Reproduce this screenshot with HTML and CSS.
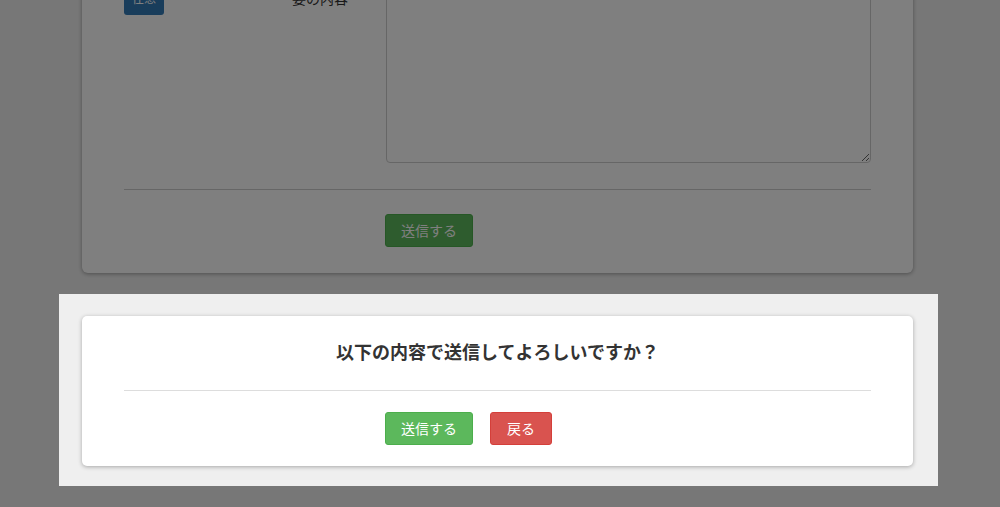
FILE: index.html
```html
<!DOCTYPE html>
<html lang="ja">
<head>
<meta charset="utf-8">
<title>送信確認</title>
<link rel="stylesheet" href="styles.css">
</head>
<body>
<div class="page">
  <form class="form-card">
    <div class="form-row">
      <div class="label-col">
        <span class="badge">任意</span>
        <span class="label-text">ご依頼の概<br>要の内容</span>
      </div>
      <div class="field-col">
        <textarea class="textarea"></textarea>
      </div>
    </div>
    <hr class="divider">
    <div class="btn-row">
      <div></div>
      <div class="btn-group">
        <button type="button" class="btn btn-success">送信する</button>
      </div>
    </div>
  </form>
</div>

<div class="overlay">
  <div class="modal">
    <div class="modal-card">
      <h3 class="modal-title">以下の内容で送信してよろしいですか？</h3>
      <hr class="divider modal-divider">
      <div class="btn-row">
        <div></div>
        <div class="btn-group">
          <button type="button" class="btn btn-success">送信する</button>
          <button type="button" class="btn btn-danger">戻る</button>
        </div>
      </div>
    </div>
  </div>
</div>
</body>
</html>
```

FILE: styles.css
```css
* { box-sizing: border-box; }

html, body {
  margin: 0;
  padding: 0;
  height: 100%;
  overflow: hidden;
}

body {
  background: #efefef;
  font-family: "Noto Sans CJK JP", "Noto Sans", "Liberation Sans", sans-serif;
  font-size: 14px;
  color: #333;
}

.page {
  padding-left: 82px;
}

.form-card {
  width: 831px;
  margin-top: -14px;
  background: #fff;
  border-radius: 6px;
  box-shadow: 0 1px 4px rgba(0, 0, 0, 0.35);
  padding: 0 42px 26px;
}

.form-row {
  display: grid;
  grid-template-columns: 262px 1fr;
}

.label-col {
  display: flex;
  justify-content: space-between;
  align-items: flex-start;
  padding-right: 38px;
}

.badge {
  display: inline-block;
  height: 29px;
  width: 40px;
  padding-top: 2px;
  background: #337ab7;
  color: #fff;
  border-radius: 3px;
  font-size: 12px;
  line-height: 20px;
  text-align: center;
}

.label-text {
  margin-top: -18px;
  text-align: right;
  line-height: 20px;
  font-size: 14px;
  color: #333;
}

.field-col {
  display: flex;
}

.textarea {
  display: block;
  width: 485px;
  height: 177px;
  border: 1px solid #ccc;
  border-radius: 4px;
  background: #fff;
  resize: vertical;
  box-shadow: inset 0 1px 1px rgba(0, 0, 0, 0.075);
  font-family: inherit;
}

.divider {
  border: 0;
  border-top: 1px solid #ccc;
  margin: 26px 0 24px;
  height: 0;
}

.btn-row {
  display: grid;
  grid-template-columns: 261px 1fr;
}

.btn-group {
  display: flex;
  gap: 17px;
}

.btn {
  font-family: inherit;
  font-size: 14px;
  line-height: 19px;
  padding: 6px 15px;
  border: 1px solid transparent;
  border-radius: 3px;
  color: #fff;
  cursor: pointer;
}

.btn-success {
  background: #5cb85c;
  border-color: #4cae4c;
}

.btn-danger {
  background: #d9534f;
  border-color: #d43f3a;
  padding: 6px 16px;
}

.overlay {
  position: fixed;
  inset: 0;
  background: rgba(0, 0, 0, 0.5);
  padding: 294px 0 0 59px;
}

.modal {
  width: 879px;
  height: 192px;
  background: #efefef;
  padding: 22px 25px 0 23px;
}

.modal-card {
  width: 831px;
  height: 150px;
  background: #fff;
  border-radius: 5px;
  box-shadow: 0 1px 4px rgba(0, 0, 0, 0.3);
  padding: 22px 42px 0;
}

.modal-title {
  margin: 0;
  font-size: 18px;
  line-height: 26px;
  font-weight: bold;
  text-align: center;
  color: #333;
}

.modal-divider {
  border-top-color: #ddd;
  margin: 26px 0 21px;
}
```
